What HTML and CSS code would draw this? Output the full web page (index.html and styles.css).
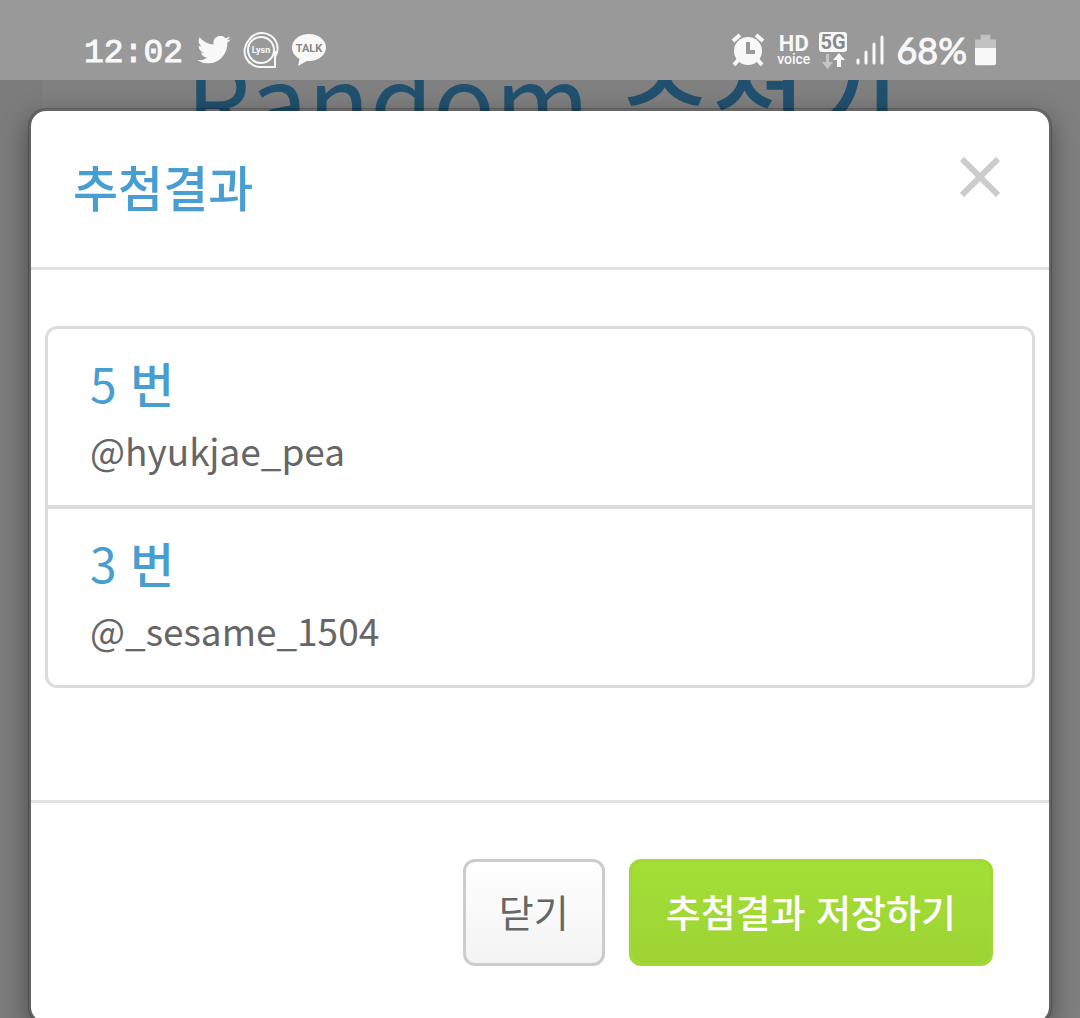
FILE: index.html
```html
<!DOCTYPE html>
<html lang="ko">
<head>
<meta charset="utf-8">
<meta name="viewport" content="width=device-width, initial-scale=1">
<title>Random 추첨기</title>
<link rel="stylesheet" href="styles.css">
</head>
<body>
<div class="page">
  <header class="status">
    <div class="status-group">
      <span class="clock">12:02</span>
      <svg class="twitter" width="34" height="28" viewBox="0 0 24 20" aria-hidden="true"><path fill="#f8f8f8" d="M24 2.3a9.8 9.8 0 0 1-2.8.8 4.9 4.9 0 0 0 2.1-2.7 9.9 9.9 0 0 1-3.1 1.2 4.9 4.9 0 0 0-8.4 4.5A14 14 0 0 1 1.7.9a4.9 4.9 0 0 0 1.5 6.6 4.9 4.9 0 0 1-2.2-.6c0 2.3 1.6 4.4 3.9 4.9a5 5 0 0 1-2.2.1 4.9 4.9 0 0 0 4.6 3.4A9.9 9.9 0 0 1 0 17.3a14 14 0 0 0 7.5 2.2c9.1 0 14.3-7.7 14-14.6A10 10 0 0 0 24 2.3z"/></svg>
      <svg width="36" height="38" viewBox="0 0 36 38" aria-hidden="true"><g fill="none" stroke="#f8f8f8" stroke-width="2"><path d="M32 20V36H19A16 16 0 0 1 6 9"/><path d="M6 9A15 15 0 1 1 32 26"/><circle cx="18" cy="19" r="13"/></g><text x="18" y="22" text-anchor="middle" class="lysn-text">Lysn</text></svg>
      <svg width="36" height="34" viewBox="0 0 36 34" aria-hidden="true"><path fill="#f8f8f8" d="M18 1C8.500 1 1 7 1 14.500c0 5 3 9 7.500 11.500L7 33l9-5h2c9.500 0 17-6 17-13.500S27.500 1 18 1z"/><text x="18" y="19" text-anchor="middle" class="talk-text">TALK</text></svg>
    </div>
    <div class="status-group status-right">
      <svg class="alarm" width="34" height="34" viewBox="0 0 34 34" aria-hidden="true"><circle cx="17" cy="18" r="14" fill="#f8f8f8"/><path stroke="#f8f8f8" stroke-width="4" d="M2 8l7-6M25 2l7 6M8 26l-5 6M26 26l5 6"/><path fill="none" stroke="#999" stroke-width="4" d="M17 9v10h7"/></svg>
      <span class="hd"><b>HD</b><span>voice</span></span>
      <svg width="30" height="38" viewBox="0 0 30 38" aria-hidden="true"><rect x="1" y="1" width="28" height="20" rx="3" fill="#f8f8f8"/><text x="15" y="18" text-anchor="middle" class="fiveg-text">5G</text><path fill="#c4c4c4" d="M8 23h3v8h4l-5.500 7L4 31h4z"/><path fill="#f8f8f8" d="M19 36h4v-7h4l-6-7-6 7h4z"/></svg>
      <svg class="signal" width="28" height="32" viewBox="0 0 28 32" aria-hidden="true"><path stroke="#f8f8f8" stroke-width="3" stroke-linecap="round" d="M2 26v3M10 18v11M18 10v19M26 3v26"/></svg>
      <span class="percent">68%</span>
      <svg width="21" height="32" viewBox="0 0 22 32" aria-hidden="true"><path fill="#c2c2c2" d="M6 0h10v5h6v9H0V5h6z"/><path fill="#f8f8f8" d="M0 14h22v16q0 2-2 2H2q-2 0-2-2z"/></svg>
    </div>
  </header>
  <main class="content"><h1 class="page-title">Random <span class="hangul">추첨기</span></h1></main>
  <section class="modal" role="dialog" aria-labelledby="result-title">
    <header class="modal-header">
      <h2 class="modal-title" id="result-title">추첨결과</h2>
      <button class="close" type="button" aria-label="닫기"><svg width="40" height="40" viewBox="0 0 40 40" aria-hidden="true"><path stroke="#ccc" stroke-width="6" d="M2 2l36 36M38 2L2 38"/></svg></button>
    </header>
    <div class="modal-body">
      <ul class="results">
        <li class="result"><h3 class="result-number">5 <span class="hangul">번</span></h3><p class="result-name">@hyukjae_pea</p></li>
        <li class="result"><h3 class="result-number">3 <span class="hangul">번</span></h3><p class="result-name">@_sesame_1504</p></li>
      </ul>
    </div>
    <footer class="modal-footer">
      <button class="btn" type="button">닫기</button>
      <button class="btn btn-save" type="button">추첨결과 저장하기</button>
    </footer>
  </section>
</div>
</body>
</html>
```
FILE: styles.css
```css
* { box-sizing: border-box; }
body {
  margin: 0;
  font-family: "Noto Sans CJK KR", sans-serif;
  color: #666;
}
h1, h2, h3, p, ul { margin: 0; padding: 0; }
.page {
  position: relative;
  height: 100vh;
  overflow: hidden;
  background: #7c7c7c;
}
.status {
  position: relative;
  z-index: 2;
  display: flex;
  align-items: center;
  justify-content: space-between;
  height: 80px;
  padding: 20px 84px 0;
  background: #999;
  color: #f8f8f8;
}
.status-group { display: flex; align-items: center; gap: 12px; }
.status-right { gap: 8px; }
.clock { padding-top: 8px; font: 33px/40px "Liberation Mono", monospace; -webkit-text-stroke: 1px #f8f8f8; }
.twitter { margin-left: 2px; }
.percent { font: 36px/40px Lato, sans-serif; -webkit-text-stroke: 1px #f8f8f8; }
.alarm, .signal { margin-right: 4px; }
.hd { display: flex; flex-direction: column; align-items: center; font: 500 14px/13px Roboto, sans-serif; }
.hd b { font-size: 22px; line-height: 18px; }
.lysn-text { font: bold 9px Roboto, sans-serif; fill: #f8f8f8; }
.talk-text { font: bold 11px Roboto, sans-serif; fill: #888; }
.fiveg-text { font: bold 20px Roboto, sans-serif; fill: #888; }
.hangul { font-weight: 500; }
.content {
  height: 100%;
  margin: 0 0 0 42px;
  padding: 0 144px;
  background: #808080;
}
.page-title {
  margin-top: -58px;
  font-size: 102px;
  font-weight: 400;
  line-height: 150px;
  white-space: nowrap;
  color: #21516f;
}
.modal {
  position: absolute;
  z-index: 1;
  top: 108px;
  left: 28px;
  right: 28px;
  background: #fff;
  background-clip: padding-box;
  border: 3px solid rgba(0, 0, 0, .2);
  border-radius: 18px;
  box-shadow: 0 9px 27px rgba(0, 0, 0, .4);
}
.modal-header {
  display: flex;
  align-items: flex-start;
  justify-content: space-between;
  padding: 39px 49px 45px 42px;
  border-bottom: 3px solid #e3e3e3;
}
.modal-title { font-size: 49px; font-weight: 500; line-height: 72px; color: #489dd1; }
.close { display: flex; margin-top: 7px; padding: 0; border: 0; background: none; }
.modal-body { padding: 56px 14px 112px; }
.results { list-style: none; border: 3px solid #dcdcdc; border-radius: 12px; }
.result { padding: 18px 42px 22px; }
.result + .result { border-top: 4px solid #dcdcdc; }
.result-number { font-size: 48px; font-weight: 400; line-height: 70px; color: #489dd1; }
.result-name { font-size: 37px; line-height: 66px; }
.modal-footer {
  display: flex;
  justify-content: flex-end;
  gap: 24px;
  padding: 56px;
  border-top: 3px solid #e3e3e3;
}
.btn {
  height: 107px;
  padding: 0 33px 4px;
  border: 3px solid #ccc;
  border-radius: 12px;
  background: linear-gradient(#fff, #f3f3f3);
  font: 38px/56px "Noto Sans CJK KR", sans-serif;
  color: #666;
}
.btn-save {
  padding: 0 34px 4px;
  border-color: #a0d936;
  background: #a0d936 linear-gradient(#a4df37, #9dd334);
  font-weight: 500;
  color: #fff;
}
```
